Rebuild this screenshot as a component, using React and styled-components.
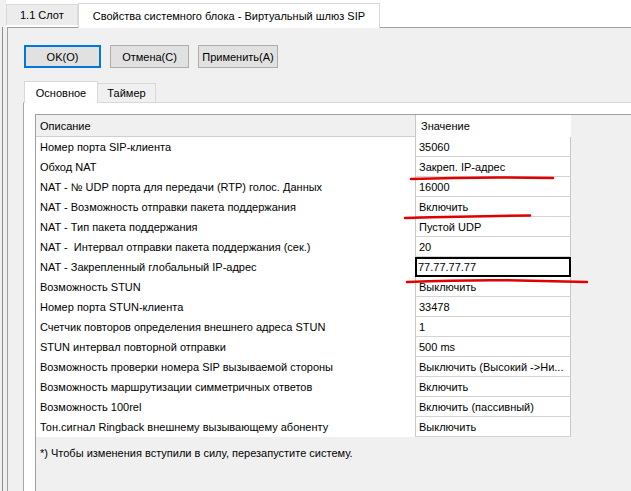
import React from "react";
import styled, { createGlobalStyle } from "styled-components";

const GlobalStyle = createGlobalStyle`
  html, body {
    margin: 0;
    padding: 0;
    background: #f0f0f0;
  }
  * {
    box-sizing: border-box;
  }
`;

const Page = styled.div`
  position: relative;
  width: 631px;
  height: 491px;
  overflow: hidden;
  display: flex;
  flex-direction: column;
  background: #f0f0f0;
  font-family: "Liberation Sans", Arial, sans-serif;
  font-size: 11px;
  color: #000;
`;

const TabStrip = styled.div`
  height: 27px;
  display: flex;
  align-items: flex-end;
  padding-left: 6px;
  background: linear-gradient(to right, #f0f0f0 6px, #fff 6px);
`;

const WindowTab = styled.div`
  display: flex;
  align-items: center;
  height: ${(p) => (p.$active ? "25px" : "21px")};
  margin-bottom: ${(p) => (p.$active ? "-1px" : "2px")};
  padding: 0 ${(p) => (p.$active ? "14px" : "13px")};
  background: ${(p) => (p.$active ? "#fff" : "#ececec")};
  border: 1px solid #d9d9d9;
  border-bottom: none;
  position: relative;
  z-index: 1;
  white-space: nowrap;
`;

const Body = styled.div`
  flex: 1;
  display: flex;
  padding-left: 2px;
  background: #f0f0f0;
  min-height: 0;
`;

const Frame = styled.div`
  flex: 1;
  display: flex;
  padding-left: 4px;
  border-left: 1px solid #8c8c8c;
`;

const Panel = styled.div`
  flex: 1;
  display: flex;
  flex-direction: column;
  padding: 17px 0 0 15px;
  border-left: 1px solid #a0a0a0;
  border-top: 1px solid #a0a0a0;
  background: #f0f0f0;
`;

const ButtonRow = styled.div`
  display: flex;
  gap: 9px;
  padding-left: 1px;
`;

const Button = styled.button`
  width: ${(p) => p.$w}px;
  height: 23px;
  padding: 0;
  font-family: inherit;
  font-size: 11px;
  color: #000;
  background: #e1e1e1;
  border: ${(p) => (p.$default ? "2px solid #0078d7" : "1px solid #adadad")};
  border-radius: 0;
`;

const InnerTabs = styled.div`
  display: flex;
  align-items: flex-end;
  height: 21px;
  margin-top: 13px;
  padding-left: 1px;
`;

const InnerTab = styled.div`
  display: flex;
  align-items: center;
  justify-content: center;
  width: ${(p) => p.$w}px;
  height: ${(p) => (p.$active ? "22px" : "19px")};
  margin-bottom: ${(p) => (p.$active ? "-1px" : "0")};
  background: ${(p) => (p.$active ? "#fff" : "#f0f0f0")};
  border: 1px solid #d9d9d9;
  border-bottom: none;
  border-left: ${(p) => (p.$active ? "1px solid #d9d9d9" : "none")};
  position: relative;
  z-index: 1;
`;

const TabPanel = styled.div`
  flex: 1;
  display: flex;
  flex-direction: column;
  padding: 11px 0 0 11px;
  background: #fff;
  border-left: 1px solid #a8a8a8;
  border-top: 1px solid #d9d9d9;
`;

const Grid = styled.div`
  flex: 1;
  background: #f0f0f0;
  border-left: 1px solid #a0a0a0;
  border-top: 1px solid #a0a0a0;
`;

const Rows = styled.div`
  display: grid;
  grid-template-columns: 379px 156px;
`;

const HeadCell = styled.div`
  height: 22px;
  display: flex;
  align-items: center;
  padding-left: ${(p) => (p.$value ? "5px" : "4px")};
  background: ${(p) => (p.$value ? "#fff" : "#f0f0f0")};
  border-bottom: ${(p) => (p.$value ? "none" : "1px solid #d0d0d0")};
  border-left: ${(p) => (p.$value ? "1px solid #c8c8c8" : "none")};
`;

const DescCell = styled.div`
  height: 20px;
  display: flex;
  align-items: center;
  padding-left: 4px;
  background: #fff;
  white-space: pre;
`;

const ValueCell = styled.div`
  height: 20px;
  display: flex;
  align-items: center;
  padding-left: ${(p) => (p.$selected ? "2px" : "3px")};
  background: #fff;
  white-space: nowrap;
  overflow: hidden;
  border-left: 1px solid #c8c8c8;
  border-right: 1px solid #c8c8c8;
  border-bottom: 1px solid #d4d4d4;
  outline: ${(p) => (p.$selected ? "2px solid #000" : "none")};
  outline-offset: -2px;
`;

const Footnote = styled.div`
  padding: 10px 0 0 4px;
`;

const Marks = styled.svg`
  position: absolute;
  left: 0;
  top: 0;
  pointer-events: none;
`;

const rows = [
  ["Номер порта SIP-клиента", "35060"],
  ["Обход NAT", "Закреп. IP-адрес"],
  ["NAT - № UDP порта для передачи (RTP) голос. Данных", "16000"],
  ["NAT - Возможность отправки пакета поддержания", "Включить"],
  ["NAT - Тип пакета поддержания", "Пустой UDP"],
  ["NAT -  Интервал отправки пакета поддержания (сек.)", "20"],
  ["NAT - Закрепленный глобальный IP-адрес", "77.77.77.77", true],
  ["Возможность STUN", "Выключить"],
  ["Номер порта STUN-клиента", "33478"],
  ["Счетчик повторов определения внешнего адреса STUN", "1"],
  ["STUN интервал повторной отправки", "500 ms"],
  ["Возможность проверки номера SIP вызываемой стороны", "Выключить (Высокий ->Ни..."],
  ["Возможность маршрутизации симметричных ответов", "Включить"],
  ["Возможность 100rel", "Включить (пассивный)"],
  ["Тон.сигнал Ringback внешнему вызывающему абоненту", "Выключить"],
];

export default function App() {
  return (
    <>
      <GlobalStyle />
      <Page>
        <TabStrip>
          <WindowTab>1.1 Слот</WindowTab>
          <WindowTab $active>Свойства системного блока - Виртуальный шлюз SIP</WindowTab>
        </TabStrip>
        <Body>
          <Frame>
            <Panel>
              <ButtonRow>
                <Button $w={77} $default>OK(O)</Button>
                <Button $w={79}>Отмена(C)</Button>
                <Button $w={80}>Применить(A)</Button>
              </ButtonRow>
              <InnerTabs>
                <InnerTab $w={74} $active>Основное</InnerTab>
                <InnerTab $w={58}>Таймер</InnerTab>
              </InnerTabs>
              <TabPanel>
                <Grid>
                  <Rows>
                    <HeadCell>Описание</HeadCell>
                    <HeadCell $value>Значение</HeadCell>
                    {rows.map(([desc, value, selected]) => (
                      <React.Fragment key={desc}>
                        <DescCell>{desc}</DescCell>
                        <ValueCell $selected={selected}>{value}</ValueCell>
                      </React.Fragment>
                    ))}
                  </Rows>
                  <Footnote>*) Чтобы изменения вступили в силу, перезапустите систему.</Footnote>
                </Grid>
              </TabPanel>
            </Panel>
          </Frame>
        </Body>
        <Marks width="631" height="491" viewBox="0 0 631 491">
          <g fill="none" stroke="#e00000" strokeWidth="2.5" strokeLinecap="round">
            <path d="M411 179 Q480 176.5 553 178" />
            <path d="M405 218 Q470 216 530 215.5" />
            <path d="M407 282 Q470 279.5 520 280.5 T587 282" />
          </g>
        </Marks>
      </Page>
    </>
  );
}
